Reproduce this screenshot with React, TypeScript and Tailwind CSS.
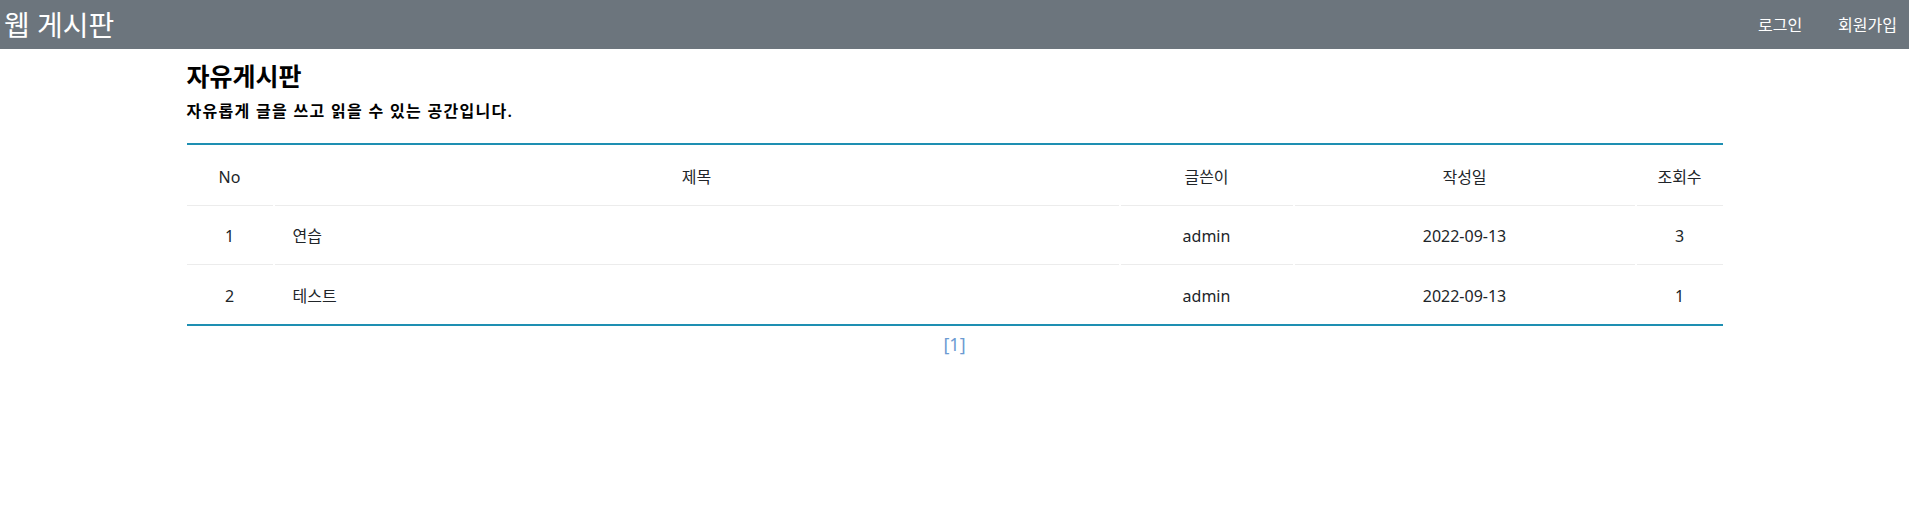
import React from "react";

interface Post {
  no: number;
  title: string;
  writer: string;
  date: string;
  views: number;
}

const posts: Post[] = [
  { no: 1, title: "연습", writer: "admin", date: "2022-09-13", views: 3 },
  { no: 2, title: "테스트", writer: "admin", date: "2022-09-13", views: 1 },
];

const font = "font-['Noto_Sans','Noto_Sans_CJK_KR',sans-serif]";

function Row({ post, last }: { post: Post; last: boolean }) {
  const cell = `h-[59px] pt-[2px] flex items-center ${last ? "" : "border-b border-[#ececec]"}`;
  return (
    <div className="flex gap-[2px] text-[16px] text-[#212529]">
      <div className={`${cell} w-[86px] justify-center`}>{post.no}</div>
      <div className={`${cell} flex-1 pl-[18px]`}>{post.title}</div>
      <div className={`${cell} w-[172px] justify-center`}>{post.writer}</div>
      <div className={`${cell} w-[340px] justify-center`}>{post.date}</div>
      <div className={`${cell} w-[86px] justify-center`}>{post.views}</div>
    </div>
  );
}

export default function App() {
  return (
    <div className={`min-h-screen bg-white ${font}`}>
      {/* Navbar */}
      <nav className="h-[49px] bg-[#6c757d] flex items-center justify-between pl-[4px] pr-[12px]">
        <a className="text-white text-[28px] leading-none">웹 게시판</a>
        <div className="flex gap-[36px] text-white text-[16px]">
          <a>로그인</a>
          <a>회원가입</a>
        </div>
      </nav>

      <div className="w-[1536px] mx-auto">
        <h2 className="mt-[12px] text-[25px] font-bold leading-[1.2] text-black">자유게시판</h2>
        <p className="mt-[8px] text-[16px] tracking-[1.3px] font-semibold text-black">
          자유롭게 글을 쓰고 읽을 수 있는 공간입니다.
        </p>

        {/* Board table */}
        <div className="mt-[20px] border-t-2 border-b-2 border-[#1e8fb2]">
          <div className="flex gap-[2px] text-[16px] text-[#212529]">
            <div className="h-[61px] pt-[3px] w-[86px] flex items-center justify-center border-b border-[#ececec]">No</div>
            <div className="h-[61px] pt-[3px] flex-1 flex items-center justify-center border-b border-[#ececec]">제목</div>
            <div className="h-[61px] pt-[3px] w-[172px] flex items-center justify-center border-b border-[#ececec]">글쓴이</div>
            <div className="h-[61px] pt-[3px] w-[340px] flex items-center justify-center border-b border-[#ececec]">작성일</div>
            <div className="h-[61px] pt-[3px] w-[86px] flex items-center justify-center border-b border-[#ececec]">조회수</div>
          </div>
          {posts.map((p, i) => (
            <Row key={p.no} post={p} last={i === posts.length - 1} />
          ))}
        </div>

        <div className="flex justify-center mt-[5px]">
          <a className="text-[18px] text-[#6c9bd2]">[1]</a>
        </div>
      </div>
    </div>
  );
}
